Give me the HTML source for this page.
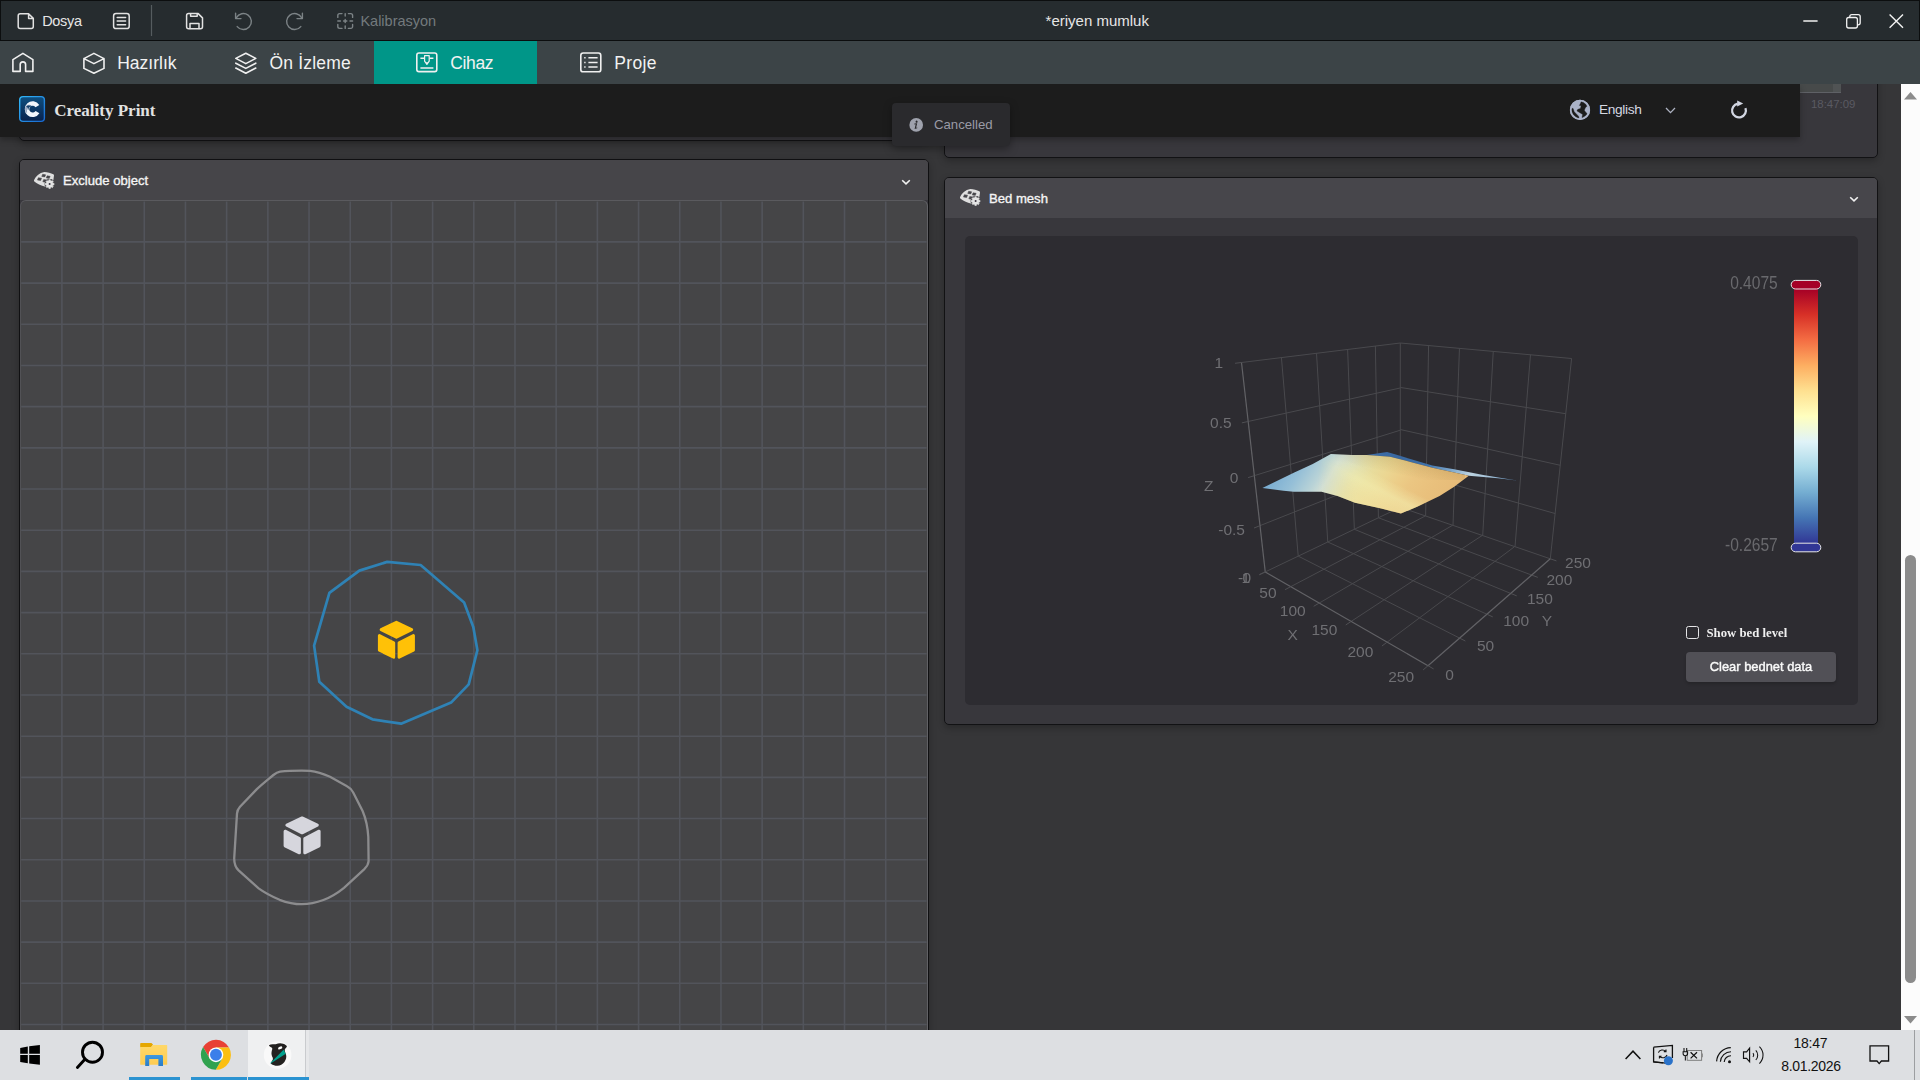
<!DOCTYPE html>
<html><head><meta charset="utf-8"><title>Creality Print</title>
<style>
*{box-sizing:border-box;margin:0;padding:0}
html,body{width:1920px;height:1080px;overflow:hidden;background:#363638;font-family:"Liberation Sans",sans-serif;}
.abs{position:absolute}
svg{position:absolute;overflow:visible}
#titlebar{left:0;top:0;width:1920px;height:41px;background:#262c2f;border-top:1px solid #0c0e0f;border-left:1px solid #0c0e0f;border-right:1.4px solid #0c0e0f;border-bottom:1px solid #0b0d0e}
#navbar{left:0;top:41px;width:1920px;height:43px;background:#3c4447}
#tab-active{left:374px;top:41px;width:163px;height:43px;background:#009688}
.tb{position:absolute;font-size:14.5px;color:#e6e6e6;line-height:20px;top:10.5px;white-space:nowrap}
.nv{position:absolute;font-size:17.5px;color:#f2f2f2;line-height:24px;top:50.5px;white-space:nowrap}
#content{left:0;top:84px;width:1901px;height:946px;background:#363638;overflow:hidden}
#scroll{left:1901px;top:84px;width:19px;height:946px;background:#fcfcfc}
#apphead{left:0;top:84px;width:1800px;height:53px;background:#1c1c1c;box-shadow:0 3px 6px rgba(0,0,0,.28)}
.card{position:absolute;background:#38373c;border:1px solid #121214;border-radius:5px;box-shadow:0 3px 7px rgba(0,0,0,.25)}
.hd{position:absolute;left:0;top:0;right:0;background:#47464b;border-radius:4px 4px 0 0}
.hdt{position:absolute;font-size:13.1px;color:#f4f4f4;white-space:nowrap;line-height:16px;-webkit-text-stroke:.35px #f4f4f4}
#taskbar{left:0;top:1030px;width:1920px;height:50px;background:#dddfe2}
.lbl{font-family:"Liberation Sans",sans-serif;font-size:15.5px;fill:#6f6f73}
.gl{stroke:#49494d;stroke-width:1;fill:none}
.tk{stroke:#4f4f53;stroke-width:1;fill:none}
.ax{stroke:#626266;stroke-width:1.2;fill:none}
</style></head>
<body>
<!-- ======= content ======= -->
<div id="content" class="abs">
  <!-- top card fragments -->
  <div class="card" style="left:19px;top:-20px;width:910px;height:76.5px"></div>
  <div class="card" style="left:944px;top:-20px;width:934px;height:93.5px">
     <div class="abs" style="left:855px;top:19px;width:32.5px;height:9px;background:#474a4a;border-bottom:1.7px solid #5f6166"></div>
     <div class="abs" style="left:887.5px;top:19px;width:8px;height:9px;background:#505354;border-bottom:1.7px solid #5f6166"></div>
     <div class="abs" style="left:866px;top:32.2px;font-size:11.4px;line-height:14px;color:#5a5a62;white-space:nowrap">18:47:09</div>
  </div>
  <!-- Exclude object card -->
  <div class="card" style="left:19px;top:75px;width:910px;height:900px;background:#38373c;border-color:#101012">
     <div class="hd" style="height:39.5px;background:#464549"></div>
     <svg style="left:12px;top:10.1px" width="25" height="21" viewBox="-2 -2 25 21">
<path d="M0,8.3 C1.5,4.5 5.5,0.8 10.3,0 C13.5,0.2 17,1 19.3,2.2 Q20.1,2.6 20,3.6 L19.3,8.6 L15.5,9 L11.6,14.8 C7,13.6 2.6,11.4 0.3,9.4 Q-0.2,8.9 0,8.3Z" fill="#dfdfdf"/>
<g fill="#464549" stroke="#464549" stroke-width=".5" stroke-linejoin="round"><polygon points="8.65,2.30 11.65,2.80 10.75,4.90 7.75,4.40"/><polygon points="13.15,3.80 16.15,4.30 15.25,6.40 12.25,5.90"/><polygon points="4.35,5.70 7.55,6.20 6.65,8.50 3.45,8.00"/><polygon points="9.70,7.50 13.00,8.00 12.10,10.30 8.80,9.80"/></g>
<path d="M12.4,8.3 L18.4,7.7" stroke="#464549" stroke-width=".7" fill="none"/>
<circle cx="15.6" cy="12.1" r="5.1" fill="#464549"/>
<polygon points="14.88,7.66 16.32,7.66 16.41,8.69 17.44,9.12 18.23,8.45 19.25,9.47 18.58,10.26 19.01,11.29 20.04,11.38 20.04,12.82 19.01,12.91 18.58,13.94 19.25,14.73 18.23,15.75 17.44,15.08 16.41,15.51 16.32,16.54 14.88,16.54 14.79,15.51 13.76,15.08 12.97,15.75 11.95,14.73 12.62,13.94 12.19,12.91 11.16,12.82 11.16,11.38 12.19,11.29 12.62,10.26 11.95,9.47 12.97,8.45 13.76,9.12 14.79,8.69" fill="#e4e4e4" stroke="#e4e4e4" stroke-width=".6" stroke-linejoin="round"/>
<circle cx="15.6" cy="12.1" r="1.0" fill="#3a3540"/>
</svg>
     <div class="hdt" style="left:43px;top:13px">Exclude object</div>
     <svg style="left:881px;top:18.5px" width="10" height="7" viewBox="0 0 10 7"><path d="M1.2,1.2 L5,4.9 L8.8,1.2" fill="none" stroke="#f2f2f2" stroke-width="1.55"/></svg>
     <div class="abs" id="grid" style="left:0;top:40.3px;width:908px;height:860px;border-top:1.1px solid #5a5a5e;border-left:1px solid #525256;border-right:1.5px solid #616165;border-radius:6px 6px 0 0;background-color:#454547"></div>
     <svg style="left:0;top:0" width="908" height="900" viewBox="20 160 908 900"><g stroke="#52545b" stroke-width="1.6" fill="none"><line x1="61.90" y1="201.6" x2="61.90" y2="1032" /><line x1="103.09" y1="201.6" x2="103.09" y2="1032" /><line x1="144.28" y1="201.6" x2="144.28" y2="1032" /><line x1="185.47" y1="201.6" x2="185.47" y2="1032" /><line x1="226.66" y1="201.6" x2="226.66" y2="1032" /><line x1="267.85" y1="201.6" x2="267.85" y2="1032" /><line x1="309.04" y1="201.6" x2="309.04" y2="1032" /><line x1="350.23" y1="201.6" x2="350.23" y2="1032" /><line x1="391.42" y1="201.6" x2="391.42" y2="1032" /><line x1="432.61" y1="201.6" x2="432.61" y2="1032" /><line x1="473.80" y1="201.6" x2="473.80" y2="1032" /><line x1="514.99" y1="201.6" x2="514.99" y2="1032" /><line x1="556.18" y1="201.6" x2="556.18" y2="1032" /><line x1="597.37" y1="201.6" x2="597.37" y2="1032" /><line x1="638.56" y1="201.6" x2="638.56" y2="1032" /><line x1="679.75" y1="201.6" x2="679.75" y2="1032" /><line x1="720.94" y1="201.6" x2="720.94" y2="1032" /><line x1="762.13" y1="201.6" x2="762.13" y2="1032" /><line x1="803.32" y1="201.6" x2="803.32" y2="1032" /><line x1="844.51" y1="201.6" x2="844.51" y2="1032" /><line x1="885.70" y1="201.6" x2="885.70" y2="1032" /><line x1="21.2" y1="241.90" x2="926.6" y2="241.90" /><line x1="21.2" y1="283.09" x2="926.6" y2="283.09" /><line x1="21.2" y1="324.28" x2="926.6" y2="324.28" /><line x1="21.2" y1="365.47" x2="926.6" y2="365.47" /><line x1="21.2" y1="406.66" x2="926.6" y2="406.66" /><line x1="21.2" y1="447.85" x2="926.6" y2="447.85" /><line x1="21.2" y1="489.04" x2="926.6" y2="489.04" /><line x1="21.2" y1="530.23" x2="926.6" y2="530.23" /><line x1="21.2" y1="571.42" x2="926.6" y2="571.42" /><line x1="21.2" y1="612.61" x2="926.6" y2="612.61" /><line x1="21.2" y1="653.80" x2="926.6" y2="653.80" /><line x1="21.2" y1="694.99" x2="926.6" y2="694.99" /><line x1="21.2" y1="736.18" x2="926.6" y2="736.18" /><line x1="21.2" y1="777.37" x2="926.6" y2="777.37" /><line x1="21.2" y1="818.56" x2="926.6" y2="818.56" /><line x1="21.2" y1="859.75" x2="926.6" y2="859.75" /><line x1="21.2" y1="900.94" x2="926.6" y2="900.94" /><line x1="21.2" y1="942.13" x2="926.6" y2="942.13" /><line x1="21.2" y1="983.32" x2="926.6" y2="983.32" /><line x1="21.2" y1="1024.51" x2="926.6" y2="1024.51" /></g></svg>
  </div>
  <!-- Bed mesh card -->
  <div class="card" style="left:944px;top:93px;width:934px;height:548px">
     <div class="hd" style="height:39.7px"></div>
     <svg style="left:12.8px;top:9.4px" width="25" height="21" viewBox="-2 -2 25 21">
<path d="M0,8.3 C1.5,4.5 5.5,0.8 10.3,0 C13.5,0.2 17,1 19.3,2.2 Q20.1,2.6 20,3.6 L19.3,8.6 L15.5,9 L11.6,14.8 C7,13.6 2.6,11.4 0.3,9.4 Q-0.2,8.9 0,8.3Z" fill="#dfdfdf"/>
<g fill="#47464b" stroke="#47464b" stroke-width=".5" stroke-linejoin="round"><polygon points="8.65,2.30 11.65,2.80 10.75,4.90 7.75,4.40"/><polygon points="13.15,3.80 16.15,4.30 15.25,6.40 12.25,5.90"/><polygon points="4.35,5.70 7.55,6.20 6.65,8.50 3.45,8.00"/><polygon points="9.70,7.50 13.00,8.00 12.10,10.30 8.80,9.80"/></g>
<path d="M12.4,8.3 L18.4,7.7" stroke="#47464b" stroke-width=".7" fill="none"/>
<circle cx="15.6" cy="12.1" r="5.1" fill="#47464b"/>
<polygon points="14.88,7.66 16.32,7.66 16.41,8.69 17.44,9.12 18.23,8.45 19.25,9.47 18.58,10.26 19.01,11.29 20.04,11.38 20.04,12.82 19.01,12.91 18.58,13.94 19.25,14.73 18.23,15.75 17.44,15.08 16.41,15.51 16.32,16.54 14.88,16.54 14.79,15.51 13.76,15.08 12.97,15.75 11.95,14.73 12.62,13.94 12.19,12.91 11.16,12.82 11.16,11.38 12.19,11.29 12.62,10.26 11.95,9.47 12.97,8.45 13.76,9.12 14.79,8.69" fill="#e4e4e4" stroke="#e4e4e4" stroke-width=".6" stroke-linejoin="round"/>
<circle cx="15.6" cy="12.1" r="1.0" fill="#3a3540"/>
</svg>
     <div class="hdt" style="left:44px;top:13px">Bed mesh</div>
     <svg style="left:904px;top:18px" width="10" height="7" viewBox="0 0 10 7"><path d="M1.2,1.2 L5,4.9 L8.8,1.2" fill="none" stroke="#f2f2f2" stroke-width="1.55"/></svg>
     <div class="abs" style="left:19.5px;top:58.2px;width:893.3px;height:469px;background:#2d2c31;border-radius:5px"></div>
  </div>
</div>
<div id="apphead" class="abs"></div>

<svg style="left:14px;top:90px" width="40" height="38" viewBox="14 90 40 38">
<defs><linearGradient id="lg1" x1="0" y1="0" x2="0" y2="1"><stop offset="0" stop-color="#0e4f80"/><stop offset="1" stop-color="#09214c"/></linearGradient>
<linearGradient id="lg2" x1="0" y1="0" x2="1" y2="1"><stop offset="0" stop-color="#33b8f8"/><stop offset="1" stop-color="#1868d0"/></linearGradient></defs>
<rect x="19.7" y="96.6" width="24.7" height="24.8" rx="3.4" fill="url(#lg1)" stroke="url(#lg2)" stroke-width="1.4"/>
<path d="M39.29,104.89 A7.9,7.9 0 1 0 39.43,113.26 L35.58,110.94 A3.4,3.4 0 1 1 35.51,107.34Z" fill="#f1f5fc"/>
<path d="M25.20,109.72 C24.56,106.55 27.03,104.08 29.85,104.79 C28.08,105.49 26.68,107.61 27.10,112.89 C25.97,112.54 25.34,111.13 25.20,109.72Z" fill="#8c9dba" opacity=".9"/>
<path d="M26.39,106.55 C28.44,104.79 30.90,105.14 32.31,106.76 C30.55,106.02 28.79,106.55 28.08,109.72 C27.91,107.61 27.20,106.90 26.39,106.55Z" fill="#0c3a68" opacity=".95" stroke="#0c3a68" stroke-width=".35"/>
</svg>
<div class="abs" style="left:54.3px;top:100.6px;font-family:'Liberation Serif',serif;font-weight:bold;font-size:17px;line-height:20px;color:#e2e2e2;white-space:nowrap">Creality Print</div>
<svg style="left:1560px;top:94px" width="40" height="32" viewBox="1560 94 40 32"><circle cx="1580" cy="109.9" r="10.1" fill="#aab2c8"/>
<polygon points="1581.19,101.76 1583.41,102.44 1585.48,103.93 1586.96,106.15 1585.78,107.33 1584.74,108.96 1584.44,110.59 1585.48,112.07 1587.02,113.41 1586.22,115.04 1584.59,116.22 1582.81,117.26 1581.99,117.56 1582.67,114.44 1578.37,111.78 1577.33,111.19 1577.04,110.15 1578.07,109.26 1580.44,108.52 1581.19,105.85 1579.41,105.41 1580.44,103.48" fill="#1c1c1c" stroke="#1c1c1c" stroke-width=".4" stroke-linejoin="round"/><polygon points="1572.39,107.93 1571.79,109.70 1572.09,112.07 1573.33,114.44 1575.41,116.46 1577.78,117.70 1579.02,117.94 1578.52,116.22 1576.59,114.15 1574.22,111.78 1573.19,108.81" fill="#1c1c1c" stroke="#1c1c1c" stroke-width=".4" stroke-linejoin="round"/>
<circle cx="1580" cy="109.9" r="9.5" fill="none" stroke="#aab2c8" stroke-width="1.3"/></svg>
<div class="abs" style="left:1599px;top:100.5px;font-size:13.7px;letter-spacing:-.35px;line-height:18px;color:#d6d9e2;white-space:nowrap">English</div>
<svg style="left:1665px;top:106.5px" width="11" height="7" viewBox="0 0 11 7"><path d="M1,1 L5.5,5.6 L10,1" fill="none" stroke="#aeb3c2" stroke-width="1.3"/></svg>
<svg style="left:1720px;top:94px" width="40" height="32" viewBox="1720 94 40 32">
<path d="M1745.45,108.1 A6.9,6.9 0 1 1 1737.7,103.75" fill="none" stroke="#d2d6e2" stroke-width="2.3"/>
<path d="M1737.2,100.4 L1743.2,103.45 L1737.2,106.4Z" fill="#d2d6e2"/>
</svg>


<div class="abs" style="left:892px;top:103px;width:118px;height:42.5px;background:#2a2a2d;border-radius:4px;box-shadow:0 3px 8px rgba(0,0,0,.35)"></div>
<svg style="left:909px;top:117.5px" width="14" height="14" viewBox="0 0 14 14"><circle cx="7.2" cy="6.9" r="6.8" fill="#9fa2ad"/>
<path d="M7.6,2.6 a1.05,1.05 0 1 1 -.01,0Z M5.4,5.6 L8.2,5.2 L7.1,9.8 L8.3,9.6 L8.2,10.3 L5.6,11 L6.7,6.3 L5.3,6.4Z" fill="#2a2a2d"/></svg>
<div class="abs" style="left:934px;top:116px;font-size:13.2px;line-height:17px;color:#9a9ba6;white-space:nowrap">Cancelled</div>

<!-- ======= chart ======= -->
<svg id="chart" style="left:0;top:0;will-change:transform" width="1920" height="1080" viewBox="0 0 1920 1080">
<line x1="1290.81" y1="586.63" x2="1425.38" y2="515.91" class="gl"/>
<line x1="1298.23" y1="556.12" x2="1459.58" y2="638.09" class="gl"/>
<line x1="1298.23" y1="556.13" x2="1281.43" y2="357.60" class="gl"/>
<line x1="1425.62" y1="515.99" x2="1428.59" y2="345.56" class="gl"/>
<line x1="1319.27" y1="603.04" x2="1452.60" y2="525.26" class="gl"/>
<line x1="1327.76" y1="542.00" x2="1486.88" y2="614.23" class="gl"/>
<line x1="1327.75" y1="542.00" x2="1316.53" y2="353.29" class="gl"/>
<line x1="1453.00" y1="525.39" x2="1459.46" y2="348.35" class="gl"/>
<line x1="1351.16" y1="621.41" x2="1482.26" y2="535.44" class="gl"/>
<line x1="1354.35" y1="529.28" x2="1510.71" y2="593.41" class="gl"/>
<line x1="1354.34" y1="529.28" x2="1347.64" y2="349.47" class="gl"/>
<line x1="1482.69" y1="535.59" x2="1493.28" y2="351.41" class="gl"/>
<line x1="1387.12" y1="642.14" x2="1514.69" y2="546.57" class="gl"/>
<line x1="1378.41" y1="517.77" x2="1531.69" y2="575.07" class="gl"/>
<line x1="1378.41" y1="517.77" x2="1375.39" y2="346.06" class="gl"/>
<line x1="1515.00" y1="546.68" x2="1530.48" y2="354.78" class="gl"/>
<line x1="1260.00" y1="525.65" x2="1400.30" y2="469.90" class="gl"/>
<line x1="1400.30" y1="469.42" x2="1555.11" y2="513.54" class="gl"/>
<line x1="1254.33" y1="475.66" x2="1400.30" y2="430.20" class="gl"/>
<line x1="1400.30" y1="429.52" x2="1560.24" y2="465.29" class="gl"/>
<line x1="1248.19" y1="421.46" x2="1400.30" y2="387.98" class="gl"/>
<line x1="1400.30" y1="387.44" x2="1565.73" y2="413.73" class="gl"/>
<line x1="1241.50" y1="362.50" x2="1400.30" y2="343.00" class="gl"/>
<line x1="1400.30" y1="343.00" x2="1571.60" y2="358.50" class="gl"/>
<line x1="1571.60" y1="358.50" x2="1550.30" y2="558.80" class="gl"/>
<line x1="1400.30" y1="507.30" x2="1400.30" y2="343.00" class="gl"/>
<line x1="1265.25" y1="571.90" x2="1400.30" y2="507.30" class="gl"/>
<line x1="1400.30" y1="507.30" x2="1550.30" y2="558.80" class="gl"/>
<line x1="1265.25" y1="571.90" x2="1428.00" y2="665.70" class="ax"/>
<line x1="1428.00" y1="665.70" x2="1550.30" y2="558.80" class="ax"/>
<line x1="1265.25" y1="571.90" x2="1241.50" y2="362.50" class="ax"/>
<line x1="1265.25" y1="571.90" x2="1259.39" y2="574.70" class="tk"/>
<line x1="1428.00" y1="665.70" x2="1433.63" y2="668.95" class="tk"/>
<line x1="1290.81" y1="586.63" x2="1285.06" y2="589.66" class="tk"/>
<line x1="1459.58" y1="638.09" x2="1465.38" y2="641.04" class="tk"/>
<line x1="1319.27" y1="603.04" x2="1313.66" y2="606.31" class="tk"/>
<line x1="1486.88" y1="614.23" x2="1492.80" y2="616.92" class="tk"/>
<line x1="1351.16" y1="621.41" x2="1345.72" y2="624.98" class="tk"/>
<line x1="1510.71" y1="593.41" x2="1516.72" y2="595.87" class="tk"/>
<line x1="1387.12" y1="642.14" x2="1381.92" y2="646.04" class="tk"/>
<line x1="1531.69" y1="575.07" x2="1537.78" y2="577.35" class="tk"/>
<line x1="1428.00" y1="665.70" x2="1423.11" y2="669.98" class="tk"/>
<line x1="1550.30" y1="558.80" x2="1556.45" y2="560.91" class="tk"/>
<line x1="1265.25" y1="571.90" x2="1259.39" y2="574.70" class="tk"/>
<line x1="1260.00" y1="525.65" x2="1253.96" y2="528.05" class="tk"/>
<line x1="1254.33" y1="475.66" x2="1248.13" y2="477.60" class="tk"/>
<line x1="1248.19" y1="421.46" x2="1241.84" y2="422.86" class="tk"/>
<line x1="1241.50" y1="362.50" x2="1235.05" y2="363.29" class="tk"/>

<defs>
<linearGradient id="sg1" gradientUnits="userSpaceOnUse" x1="1262.4" y1="488.1" x2="1403.1" y2="578.2">
<stop offset="0" stop-color="#78acd2"/><stop offset=".135" stop-color="#95bfd7"/><stop offset=".245" stop-color="#b9d3d7"/><stop offset=".30" stop-color="#d1dfd6"/>
<stop offset=".36" stop-color="#d9e0c4"/><stop offset=".43" stop-color="#e2dfac"/><stop offset=".5" stop-color="#e8dc9c"/><stop offset=".58" stop-color="#ebd692"/>
<stop offset=".66" stop-color="#eccd88"/><stop offset=".73" stop-color="#ebc682"/><stop offset=".86" stop-color="#e9c07c"/><stop offset="1" stop-color="#e7bb78"/></linearGradient>
<linearGradient id="sg2" gradientUnits="userSpaceOnUse" x1="1387.5" y1="478.5" x2="1375" y2="503.5">
<stop offset="0" stop-color="#f3eeb0" stop-opacity="0"/><stop offset=".5" stop-color="#f3eeb0" stop-opacity=".6"/><stop offset="1" stop-color="#f2e6a6" stop-opacity=".55"/></linearGradient>
<linearGradient id="sg4" gradientUnits="userSpaceOnUse" x1="1400" y1="455" x2="1396" y2="474">
<stop offset="0" stop-color="#9a7a3c" stop-opacity=".28"/><stop offset="1" stop-color="#9a7a3c" stop-opacity="0"/></linearGradient>
<linearGradient id="sg5" gradientUnits="userSpaceOnUse" x1="1320" y1="0" x2="1350" y2="0">
<stop offset="0" stop-color="#000" stop-opacity="1"/><stop offset="1" stop-color="#000" stop-opacity="0"/></linearGradient>
<linearGradient id="sg3" gradientUnits="userSpaceOnUse" x1="1370" y1="452" x2="1517" y2="480">
<stop offset="0" stop-color="#3d6fa9"/><stop offset=".2" stop-color="#39679f"/><stop offset=".4" stop-color="#4274ab"/><stop offset=".55" stop-color="#7aa5cb"/><stop offset=".68" stop-color="#bdd3e0"/><stop offset=".82" stop-color="#a4c3db"/><stop offset="1" stop-color="#5a8ec0"/></linearGradient>
<linearGradient id="mk" gradientUnits="userSpaceOnUse" x1="1318" y1="0" x2="1356" y2="0"><stop offset="0" stop-color="#000"/><stop offset="1" stop-color="#fff"/></linearGradient>
<mask id="mkm" maskUnits="userSpaceOnUse" x="1250" y="440" width="280" height="90"><rect x="1250" y="440" width="280" height="90" fill="url(#mk)"/></mask>
<clipPath id="cy"><polygon points="1262.40,488.10 1293.75,472.80 1312.70,464.10 1330.90,454.10 1352.10,455.00 1366.70,455.00 1390.00,456.80 1410.40,461.90 1432.30,467.70 1454.20,472.40 1468.75,475.70 1454.20,486.70 1439.60,496.10 1417.70,506.40 1400.90,513.60 1381.25,508.50 1355.00,502.70 1337.50,496.10 1321.50,491.80 1293.75,491.80 1283.50,490.75"/></clipPath>
</defs>
<polygon points="1366.70,455.00 1387.10,452.10 1395.80,454.60 1410.40,459.00 1432.30,465.50 1454.20,469.20 1483.30,475.00 1516.90,480.40 1497.90,478.20 1468.75,475.70 1454.20,472.40 1432.30,467.70 1410.40,461.90 1390.00,456.80" fill="url(#sg3)"/>
<polygon points="1262.40,488.10 1293.75,472.80 1312.70,464.10 1330.90,454.10 1352.10,455.00 1366.70,455.00 1390.00,456.80 1410.40,461.90 1432.30,467.70 1454.20,472.40 1468.75,475.70 1454.20,486.70 1439.60,496.10 1417.70,506.40 1400.90,513.60 1381.25,508.50 1355.00,502.70 1337.50,496.10 1321.50,491.80 1293.75,491.80 1283.50,490.75" fill="url(#sg1)"/>
<g clip-path="url(#cy)"><g mask="url(#mkm)"><rect x="1250" y="440" width="280" height="90" fill="url(#sg2)"/><rect x="1335" y="440" width="130" height="40" fill="url(#sg4)"/></g></g>

<text x="1223.2" y="367.8" class="lbl" text-anchor="end">1</text>
<text x="1231.6" y="427.8" class="lbl" text-anchor="end">0.5</text>
<text x="1238.4" y="483.3" class="lbl" text-anchor="end">0</text>
<text x="1245" y="535" class="lbl" text-anchor="end">-0.5</text>
<text x="1243.2" y="582.5" class="lbl" text-anchor="end">-</text>
<text x="1250.2" y="582.5" class="lbl" text-anchor="end">1</text>
<text x="1204" y="491.2" class="lbl" text-anchor="start">Z</text>
<text x="1251.2" y="582.5" class="lbl" text-anchor="end">0</text>
<text x="1276.6" y="598.1" class="lbl" text-anchor="end">50</text>
<text x="1305.7" y="615.5" class="lbl" text-anchor="end">100</text>
<text x="1337.3" y="635.1" class="lbl" text-anchor="end">150</text>
<text x="1373.3" y="657.3" class="lbl" text-anchor="end">200</text>
<text x="1414.1" y="681.9" class="lbl" text-anchor="end">250</text>
<text x="1287.6" y="639.6" class="lbl" text-anchor="start">X</text>
<text x="1445.2" y="679.8" class="lbl" text-anchor="start">0</text>
<text x="1477" y="650.9" class="lbl" text-anchor="start">50</text>
<text x="1503.2" y="625.7" class="lbl" text-anchor="start">100</text>
<text x="1527" y="604" class="lbl" text-anchor="start">150</text>
<text x="1546.5" y="584.8" class="lbl" text-anchor="start">200</text>
<text x="1565.1" y="567.8" class="lbl" text-anchor="start">250</text>
<text x="1541.8" y="625.7" class="lbl" text-anchor="start">Y</text>

<defs><linearGradient id="vm" x1="0" y1="0" x2="0" y2="1">
<stop offset="0" stop-color="#a50026"/><stop offset=".1" stop-color="#d73027"/><stop offset=".2" stop-color="#f46d43"/><stop offset=".3" stop-color="#fdae61"/>
<stop offset=".4" stop-color="#fee090"/><stop offset=".5" stop-color="#ffffbf"/><stop offset=".6" stop-color="#e0f3f8"/><stop offset=".7" stop-color="#abd9e9"/>
<stop offset=".8" stop-color="#74add1"/><stop offset=".9" stop-color="#4575b4"/><stop offset="1" stop-color="#313695"/></linearGradient></defs>
<rect x="1794" y="289" width="24" height="254.5" fill="url(#vm)"/>
<rect x="1791.2" y="280.4" width="29.6" height="8.6" rx="4.3" fill="#a50026" stroke="#e8e8ea" stroke-width="1"/>
<rect x="1791.2" y="543.2" width="29.6" height="8.6" rx="4.3" fill="#313695" stroke="#e8e8ea" stroke-width="1"/>
<text x="1777.8" y="0" transform="translate(0,288.8) scale(1,1.13)" text-anchor="end" style="font-family:'Liberation Sans',sans-serif;font-size:15.6px;fill:#69696d">0.4075</text>
<text x="1777.8" y="0" transform="translate(0,551.2) scale(1,1.13)" text-anchor="end" style="font-family:'Liberation Sans',sans-serif;font-size:15.6px;fill:#69696d">-0.2657</text>

</svg>

<div class="abs" style="left:1686px;top:626px;width:13px;height:13px;border:1.3px solid #e4e4e6;border-radius:2.5px;background:#2d2c31"></div>
<div class="abs" style="left:1706.5px;top:626px;font-family:'Liberation Serif',serif;font-weight:bold;font-size:12.75px;line-height:15px;color:#f0f0f0;white-space:nowrap">Show bed level</div>
<div class="abs" style="left:1686px;top:652px;width:150px;height:30px;background:#515056;border-radius:4px;box-shadow:0 2px 3px rgba(0,0,0,.18)"></div>
<div class="abs" style="left:1686px;top:658px;width:150px;text-align:center;font-size:12.9px;line-height:17px;color:#fafafa;white-space:nowrap;-webkit-text-stroke:.4px #fafafa">Clear bednet data</div>


<svg style="left:0;top:0" width="1000" height="1030" viewBox="0 0 1000 1030">
<polygon points="387.20,561.90 420.60,565.00 464.10,602.60 473.30,627.00 477.40,650.20 468.70,684.40 451.10,702.60 401.10,723.70 372.40,719.30 346.50,706.70 319.30,681.70 314.10,645.60 329.40,592.80 359.40,570.60" fill="none" stroke="#2f82b5" stroke-width="2.7" stroke-linejoin="round"/>
<polygon points="396.40,622.30 411.60,629.60 396.40,637.20 381.20,629.60" fill="#ffc107" stroke="#ffc107" stroke-width="3" stroke-linejoin="round"/><polygon points="379.40,635.60 393.70,642.90 393.70,657.20 379.40,650.20" fill="#ffc107" stroke="#ffc107" stroke-width="3" stroke-linejoin="round"/><polygon points="399.10,642.90 413.40,635.60 413.40,650.20 399.10,657.20" fill="#ffc107" stroke="#ffc107" stroke-width="3" stroke-linejoin="round"/>
<path d="M280,771.6 C290,770.6 300,770.6 310,770.8 C318,771.6 324,774 330,776.8 L347,786.2 C350.5,788 352,790 353.2,792.4 L362.6,811 C366,819 367.8,828 368.3,837 L368.6,861 C368.4,864.6 367,866.4 364.6,868.8 L344,887.8 C337.6,893 331,897 323.4,900 C316,902.8 309,904.2 301.7,904.2 C294,904.2 287,902.6 279.6,899.8 C272,896.6 265,893 258.6,888.4 L238.6,870.4 C235.6,867.4 234.2,863.4 234.2,858.4 L237,813.6 C237.2,810.6 238.2,808.8 240,806.8 L256.6,789.4 C262.6,783.8 268,779.6 273.4,775 C275.6,773.2 277.4,772 280,771.6Z" fill="none" stroke="#8c8c8e" stroke-width="2.3"/>
<polygon points="302.10,817.90 317.30,825.20 302.10,832.80 286.90,825.20" fill="#d6d6dd" stroke="#d6d6dd" stroke-width="3" stroke-linejoin="round"/><polygon points="285.10,831.20 299.40,838.50 299.40,852.80 285.10,845.80" fill="#d6d6dd" stroke="#d6d6dd" stroke-width="3" stroke-linejoin="round"/><polygon points="304.80,838.50 319.10,831.20 319.10,845.80 304.80,852.80" fill="#d6d6dd" stroke="#d6d6dd" stroke-width="3" stroke-linejoin="round"/>
</svg>

<!-- ======= scrollbar ======= -->
<div id="scroll" class="abs">
  <svg style="left:0;top:0" width="19" height="946"><path d="M3,15.5 L9.5,8 L16,15.5Z" fill="#8b8b8b"/><path d="M3,932 L16,932 L9.5,939.5Z" fill="#8b8b8b"/>
  <rect x="4" y="471" width="11" height="428" rx="5.5" fill="#8b8b8b"/></svg>
</div>
<!-- ======= title bar / nav ======= -->
<div id="titlebar" class="abs"></div>
<div id="navbar" class="abs"></div>
<div id="tab-active" class="abs"></div>

<svg style="left:0;top:0" width="1920" height="84" viewBox="0 0 1920 84">
<!-- file -->
<path d="M20.2,13.7 H28.6 L33.3,18.4 V26.6 a2,2 0 0 1 -2,2 H20.2 a2,2 0 0 1 -2,-2 V15.7 a2,2 0 0 1 2,-2Z M28.6,13.7 V18.4 H33.3" stroke="#e2e2e2" stroke-width="1.5" fill="none" stroke-linejoin="round" stroke-linecap="round"/>
<!-- menu -->
<rect x="113.6" y="13.6" width="15.6" height="15" rx="2.4" stroke="#e2e2e2" stroke-width="1.5" fill="none" stroke-linejoin="round" stroke-linecap="round"/>
<path d="M117.2,17.6 H125.6 M117.2,21.1 H125.6 M117.2,24.7 H125.6" stroke="#e2e2e2" stroke-width="1.5" fill="none" stroke-linejoin="round" stroke-linecap="round"/>
<line x1="151.5" y1="5" x2="151.5" y2="36" stroke="#555c5f" stroke-width="1.2"/>
<!-- save -->
<path d="M188.6,13.6 H198.2 L202.5,17.9 V26.7 a2,2 0 0 1 -2,2 H188.6 a2,2 0 0 1 -2,-2 V15.6 a2,2 0 0 1 2,-2Z" stroke="#e2e2e2" stroke-width="1.5" fill="none" stroke-linejoin="round" stroke-linecap="round"/>
<path d="M190.6,13.8 V16.2 H197.2 V13.8 M190,28.6 V23.4 H199 V28.6" stroke="#e2e2e2" stroke-width="1.5" fill="none" stroke-linejoin="round" stroke-linecap="round"/>
<!-- undo -->
<path d="M236.4,17.6 A8,8 0 1 1 237.2,26.6" stroke="#7c8386" stroke-width="1.4" fill="none" stroke-linejoin="round" stroke-linecap="round"/><path d="M235.6,13.2 V18.6 H241" stroke="#7c8386" stroke-width="1.4" fill="none" stroke-linejoin="round" stroke-linecap="round"/>
<!-- redo -->
<path d="M301.6,17.6 A8,8 0 1 0 300.8,26.6" stroke="#7c8386" stroke-width="1.4" fill="none" stroke-linejoin="round" stroke-linecap="round"/><path d="M302.4,13.2 V18.6 H297" stroke="#7c8386" stroke-width="1.4" fill="none" stroke-linejoin="round" stroke-linecap="round"/>
<!-- calibration -->
<path d="M337.8,17.4 V15.4 a1.8,1.8 0 0 1 1.8,-1.8 H342 M348.4,13.6 H350.8 a1.8,1.8 0 0 1 1.8,1.8 V17.4 M352.6,24.4 V26.6 a1.8,1.8 0 0 1 -1.8,1.8 H348.4 M342,28.4 H339.6 a1.8,1.8 0 0 1 -1.8,-1.8 V24.4 M345.2,13.6 V16 M345.2,26 V28.4 M337.8,21 H340.4 M350,21 H352.6" stroke="#7c8386" stroke-width="1.4" fill="none" stroke-linejoin="round" stroke-linecap="round"/>
<path d="M345.2,19.4 V22.6 M343.6,21 H346.8" stroke="#7c8386" stroke-width="1.4" fill="none" stroke-linejoin="round" stroke-linecap="round"/>
<!-- window controls -->
<path d="M1803.3,21 H1817.6" stroke="#f2f2f2" stroke-width="1.5" fill="none"/>
<rect x="1846.7" y="17.5" width="10.7" height="10.5" rx="2" stroke="#f2f2f2" stroke-width="1.3" fill="none"/>
<path d="M1849.8,17.3 V16.6 a2,2 0 0 1 2,-2 H1858.2 a2,2 0 0 1 2,2 V22.8 a2,2 0 0 1 -2,2 H1857.8" stroke="#f2f2f2" stroke-width="1.3" fill="none"/>
<path d="M1889.6,14.4 L1903,27.8 M1903,14.4 L1889.6,27.8" stroke="#f2f2f2" stroke-width="1.4" fill="none"/>
<!-- home -->
<path d="M12.9,59.6 L22.9,53.4 L32.9,59.6 V71.4 H25.6 V64.6 a2.7,2.7 0 0 0 -5.4,0 V71.4 H12.9Z" stroke="#f0f0f0" stroke-width="1.6" fill="none" stroke-linejoin="round" stroke-linecap="round"/>
<!-- cube -->
<path d="M93.9,53.4 L104,58.6 V68.4 L93.9,73.2 L83.9,68.4 V58.6Z M83.9,58.6 L93.9,63.6 L104,58.6" stroke="#f0f0f0" stroke-width="1.6" fill="none" stroke-linejoin="round" stroke-linecap="round"/>
<!-- layers -->
<path d="M245.8,53.2 L255.8,58.4 L245.8,63.6 L235.8,58.4Z M235.8,63.2 L245.8,68.4 L255.8,63.2 M235.8,68 L245.8,73.2 L255.8,68" stroke="#f0f0f0" stroke-width="1.6" fill="none" stroke-linejoin="round" stroke-linecap="round"/>
<!-- device -->
<rect x="416.8" y="53" width="20" height="18.6" rx="2.2" stroke="#f0f0f0" stroke-width="1.6" fill="none" stroke-linejoin="round" stroke-linecap="round"/>
<path d="M420.4,58.3 H424.4 M429.4,58.3 H433.4 M420.4,68 H433.4" stroke="#f0f0f0" stroke-width="1.4" fill="none"/>
<path d="M424.6,55.6 H429.2 V61.2 L426.9,64.4 L424.6,61.2Z" stroke="#f0f0f0" stroke-width="1.2" fill="none" stroke-linejoin="round"/>
<path d="M425.6,62.2 H428.2 L426.9,64.2Z" fill="#f0f0f0"/>
<!-- project -->
<rect x="580.8" y="53" width="20" height="18.8" rx="2.4" stroke="#f0f0f0" stroke-width="1.6" fill="none" stroke-linejoin="round" stroke-linecap="round"/>
<path d="M584.2,57.8 H585.6 M584.2,62.4 H585.6 M584.2,67 H585.6 M588.4,57.8 H597.6 M588.4,62.4 H597.6 M588.4,67 H597.6" stroke="#f0f0f0" stroke-width="1.5" fill="none"/>
</svg>
<div class="tb" style="left:42.2px;letter-spacing:-.3px">Dosya</div>
<div class="tb" style="left:360.4px;color:#737a7d">Kalibrasyon</div>
<div class="tb" style="left:1045.6px;font-size:15px">*eriyen mumluk</div>
<div class="nv" style="left:117.2px">Hazırlık</div>
<div class="nv" style="left:269.4px;letter-spacing:.2px">Ön İzleme</div>
<div class="nv" style="left:450.2px;letter-spacing:-.35px">Cihaz</div>
<div class="nv" style="left:614.2px;letter-spacing:.35px">Proje</div>

<!-- ======= taskbar ======= -->
<div id="taskbar" class="abs"></div>

<div class="abs" style="left:248px;top:1030px;width:57px;height:50px;background:#eff0f1"></div>
<div class="abs" style="left:305px;top:1030px;width:4px;height:50px;background:#e6e7e9;border-left:1px solid #c9cbce"></div>
<div class="abs" style="left:129px;top:1077px;width:51px;height:3px;background:#2b93d1"></div>
<div class="abs" style="left:191px;top:1077px;width:55.5px;height:3px;background:#2b93d1"></div>
<div class="abs" style="left:248px;top:1077px;width:61px;height:3px;background:#2b93d1"></div>
<svg style="left:0;top:1030px" width="1920" height="50" viewBox="0 1030 1920 50">
<!-- windows logo -->
<path d="M20.2,1047.9 L27.8,1046.5 V1053.7 H20.2Z M29.2,1046.3 L39.9,1045 V1053.7 H29.2Z M20.2,1055.1 H27.8 V1063.2 L20.2,1061.9Z M29.2,1055.1 H39.9 V1064.8 L29.2,1063.4Z" fill="#000"/>
<!-- search -->
<circle cx="92.5" cy="1052.2" r="10" fill="none" stroke="#000" stroke-width="2.9"/>
<path d="M84.7,1059.5 L77.4,1067.4" stroke="#000" stroke-width="2.9" stroke-linecap="round"/>
<!-- folder -->
<defs><linearGradient id="fg" x1="0" y1="0" x2="0" y2="1"><stop offset="0" stop-color="#ffd868"/><stop offset="1" stop-color="#fdcc52"/></linearGradient>
<linearGradient id="fb" x1="0" y1="0" x2="0" y2="1"><stop offset="0" stop-color="#3d99e2"/><stop offset="1" stop-color="#2a7cc6"/></linearGradient></defs>
<path d="M141,1043 H151.4 L153,1044.6 L151.2,1047.2 H140.2 V1043.8 a.8,.8 0 0 1 .8,-.8Z" fill="#e5a700"/>
<path d="M140.2,1047 H151 L153,1045 H166.6 a.6,.6 0 0 1 .6,.6 V1064.2 a.6,.6 0 0 1 -.6,.6 H140.8 a.6,.6 0 0 1 -.6,-.6Z" fill="url(#fg)"/>
<path d="M145.2,1066 V1056.4 a1.4,1.4 0 0 1 1.4,-1.4 H161.6 a1.4,1.4 0 0 1 1.4,1.4 V1066 H158.4 V1059 H149.2 V1066Z" fill="url(#fb)"/>
<!-- chrome -->
<path d="M215.95,1047.50 L229.05,1047.50 A15.0,15.0 0 0 0 203.08,1047.10 L209.63,1058.45Z" fill="#e84134"/>
<path d="M215.95,1047.50 L229.05,1047.50 A15.0,15.0 0 0 1 215.72,1069.80 L222.27,1058.45Z" fill="#fbbf12"/>
<path d="M222.27,1058.45 L215.72,1069.80 A15.0,15.0 0 0 1 203.08,1047.10 L209.63,1058.45Z" fill="#30a24f"/>
<circle cx="215.95" cy="1054.8" r="7.35" fill="#fff"/>
<circle cx="215.95" cy="1054.8" r="5.95" fill="#3b7fea"/>
<!-- creality app -->
<circle cx="277.6" cy="1055" r="13.8" fill="#f9f9f9"/>
<path d="M269.54,1046.20 Q268.52,1045.56 269.17,1045.13 Q269.81,1044.70 270.74,1044.48 Q271.67,1044.26 273.70,1044.35 Q275.74,1044.44 276.48,1044.07 Q277.22,1043.70 277.96,1043.52 Q278.70,1043.33 280.19,1043.33 Q281.67,1043.33 283.15,1043.80 Q284.63,1044.26 285.93,1045.19 Q287.22,1046.11 286.85,1046.76 Q286.48,1047.41 285.37,1048.61 Q284.26,1049.81 285.00,1051.67 Q285.74,1053.52 286.11,1055.00 Q286.48,1056.48 286.11,1058.33 Q285.74,1060.19 284.44,1062.04 Q283.15,1063.89 281.30,1064.81 Q279.44,1065.74 277.59,1065.83 Q275.74,1065.93 274.07,1065.28 Q272.41,1064.63 271.30,1063.93 Q270.19,1063.22 271.85,1061.15 Q273.52,1059.07 272.78,1057.78 Q272.04,1056.48 271.67,1055.00 Q271.30,1053.52 271.57,1052.04 Q271.85,1050.56 272.22,1049.26 Q272.59,1047.96 271.57,1047.41 Q270.56,1046.85 269.54,1046.20Z" fill="#232120"/>
<polygon points="270.11,1063.22 283.59,1049.74 285.81,1053.63 270.56,1063.59" fill="#00a08d"/>
<ellipse cx="280.19" cy="1047.96" rx="2.3" ry="1.3" transform="rotate(-27 280.19 1047.96)" fill="#fff"/>
<!-- tray chevron -->
<path d="M1625.6,1059 L1633,1051.2 L1640.4,1059" stroke="#111" stroke-width="1.5" fill="none"/>
<!-- update icon -->
<path d="M1653.6,1047.2 L1672.4,1045.4 V1058 M1666,1063.2 L1653.6,1061.8Z" stroke="#111" stroke-width="1.3" fill="none"/>
<path d="M1653.6,1047.2 V1061.8 L1663,1062.9" stroke="#111" stroke-width="1.3" fill="none"/>
<path d="M1658.4,1052.6 a4.2,3.6 0 0 1 7.4,-1.2 M1666,1049.4 V1051.6 H1663.8 M1667,1055 a4.2,3.6 0 0 1 -7.4,1.4 M1659.4,1058.4 V1056.2 H1661.6" stroke="#111" stroke-width="1.1" fill="none"/>
<circle cx="1668.4" cy="1060.8" r="4.5" fill="#2a72c9"/>
<!-- battery -->
<rect x="1687.2" y="1050.5" width="14.4" height="9.8" stroke="#7d7d7d" stroke-width="1" fill="none"/>
<path d="M1702.3,1053.6 V1057.2" stroke="#8a8a8a" stroke-width="1.2"/>
<path d="M1690.6,1052.3 L1697,1058.4 M1697,1052.3 L1690.6,1058.4" stroke="#111" stroke-width="1.25"/>
<path d="M1684,1048 V1051.6 M1686.7,1048 V1051.6 M1683.1,1051.8 H1687.6 V1053.6 a2.25,2.25 0 0 1 -4.5,0Z M1685.35,1055.8 V1060.6" stroke="#111" stroke-width="1.05" fill="none"/>
<!-- wifi -->
<path d="M1716.6,1061.4 A14.6,14.6 0 0 1 1730.8,1047.6 M1720.4,1061.8 A10.6,10.6 0 0 1 1731,1051.8 M1724.2,1062 A6.6,6.6 0 0 1 1731,1055.8" stroke="#111" stroke-width="1.15" fill="none"/>
<circle cx="1729.5" cy="1061.7" r="1.5" fill="#111"/>
<!-- volume -->
<path d="M1743.5,1051.8 H1746.6 L1749.6,1048.2 V1061.8 L1746.6,1058.4 H1743.5Z" stroke="#111" stroke-width="1.15" fill="none" stroke-linejoin="miter"/>
<path d="M1753,1053.2 a3,3 0 0 1 0,3.8 M1755.8,1050.4 a7,7 0 0 1 0,9.6 M1759.4,1046.6 a11.8,11.8 0 0 1 0,17" stroke="#111" stroke-width="1.05" fill="none"/>
<!-- notification -->
<path d="M1870,1045.9 H1888.6 V1061 H1881.4 L1879.2,1063.6 L1877,1061 H1870Z" stroke="#111" stroke-width="1.3" fill="none"/>
<line x1="1914.5" y1="1030" x2="1914.5" y2="1080" stroke="#9c9ea1" stroke-width="1"/>
</svg>
<div class="abs" style="left:1769.4px;top:1035px;width:82px;text-align:center;font-size:14px;line-height:17px;color:#111;white-space:nowrap;letter-spacing:-.3px">18:47</div>
<div class="abs" style="left:1770px;top:1058px;width:82px;text-align:center;font-size:14px;line-height:17px;color:#111;white-space:nowrap;letter-spacing:-.3px">8.01.2026</div>

</body></html>
